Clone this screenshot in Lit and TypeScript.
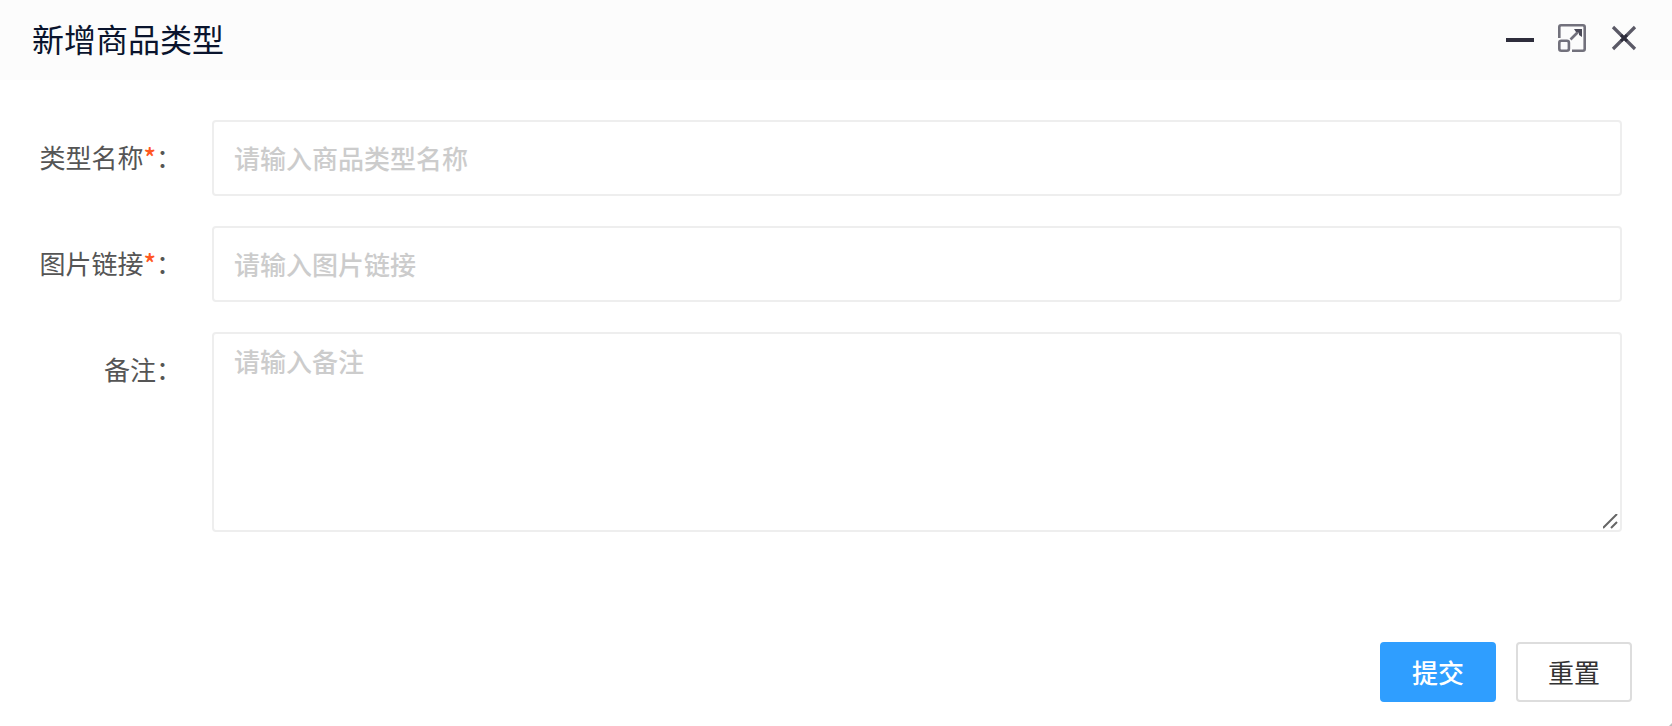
import { LitElement, html, css } from "lit";
import { customElement } from "lit/decorators.js";

@customElement("app-root")
export class AppRoot extends LitElement {
  static styles = css`
    :host {
      display: block;
      font-family: "Noto Sans CJK SC", "Noto Sans", sans-serif;
      font-size: 26px;
      line-height: 38px;
      color: #333;
    }
    * {
      box-sizing: border-box;
    }
    .dialog {
      display: flex;
      flex-direction: column;
      min-height: 100vh;
      background: #fff;
      position: relative;
    }
    .header {
      display: flex;
      align-items: center;
      justify-content: space-between;
      height: 80px;
      padding: 0 32px 4px;
      background: #fcfcfc;
    }
    .title {
      margin: 0;
      font-size: 32px;
      font-weight: 400;
      line-height: 76px;
      color: #0a142d;
    }
    .tools {
      display: flex;
      gap: 12px;
    }
    .tool {
      display: block;
      width: 40px;
      height: 40px;
      padding: 0;
      border: 0;
      background: none;
      cursor: pointer;
    }
    .tool svg {
      display: block;
    }
    .form {
      display: flex;
      flex: 1;
      flex-direction: column;
    }
    .fields {
      display: flex;
      flex-direction: column;
      gap: 30px;
      padding: 40px 50px 40px 32px;
    }
    .row {
      display: flex;
      align-items: flex-start;
      gap: 30px;
    }
    .label {
      flex: none;
      width: 150px;
      padding: 18px 0;
      text-align: right;
      white-space: nowrap;
      color: #555;
    }
    .required {
      font-weight: 500;
      color: #ff5722;
    }
    .control {
      display: block;
      flex: 1;
      min-width: 0;
      margin: 0;
      padding: 0 20px;
      border: 2px solid #eee;
      border-radius: 4px;
      outline: none;
      background: #fff;
      font: inherit;
      color: #333;
    }
    .control::placeholder {
      font-weight: 500;
      color: #ccc;
      opacity: 1;
    }
    .control:focus {
      border-color: #d2d2d2;
    }
    .input {
      height: 76px;
      padding-bottom: 2px;
    }
    .area {
      height: 200px;
      padding-top: 8px;
      padding-bottom: 8px;
      resize: vertical;
    }
    .area::-webkit-resizer {
      background: none;
    }
    .area-wrap {
      display: flex;
      flex: 1;
      position: relative;
    }
    .grip {
      position: absolute;
      right: 3px;
      bottom: 2px;
      pointer-events: none;
    }
    .corner {
      position: absolute;
      right: 0;
      bottom: 0;
      pointer-events: none;
    }
    .footer {
      display: flex;
      justify-content: flex-end;
      gap: 20px;
      margin-top: auto;
      padding: 0 40px 24px;
    }
    .button {
      height: 60px;
      padding: 0 30px;
      border: 2px solid #ddd;
      border-radius: 4px;
      background: #fff;
      font: inherit;
      line-height: 56px;
      color: #333;
      cursor: pointer;
    }
    .primary {
      border-color: #2f9eff;
      background: #2f9eff;
      font-weight: 500;
      color: #fff;
    }
  `;

  render() {
    return html`
      <section class="dialog" role="dialog" aria-labelledby="title">
        <header class="header">
          <h1 class="title" id="title">新增商品类型</h1>
          <div class="tools">
            <button class="tool" type="button" aria-label="最小化">
              <svg width="40" height="40" viewBox="0 0 40 40">
                <path d="M10 22H38" stroke="#2e2d3c" stroke-width="4" />
              </svg>
            </button>
            <button class="tool" type="button" aria-label="最大化">
              <svg width="40" height="40" viewBox="0 0 40 40" fill="none" stroke="#72717c" stroke-width="2.6">
                <path d="M11.3 20V9Q11.3 7.3 13 7.3H35Q36.7 7.3 36.7 9V31Q36.7 32.7 35 32.7H24" />
                <rect x="11.3" y="22.7" width="9.6" height="10" rx="2" />
                <path d="M22.5 21.5L32 12" />
                <path d="M26 11H34V19L31 17V14H28Z" fill="#4b4a58" stroke="none" />
              </svg>
            </button>
            <button class="tool" type="button" aria-label="关闭">
              <svg width="40" height="40" viewBox="0 0 40 40">
                <path d="M13 9L35 31M35 9L13 31" stroke="#5a5966" stroke-width="3.2" />
                <path d="M21 17L27 23M27 17L21 23" stroke="#2e2d3c" stroke-width="3" />
              </svg>
            </button>
          </div>
        </header>
        <form class="form" @submit=${(e: Event) => e.preventDefault()}>
          <div class="fields">
            <div class="row">
              <label class="label" for="name">类型名称<span class="required">*</span>：</label>
              <input class="control input" id="name" type="text" placeholder="请输入商品类型名称" required />
            </div>
            <div class="row">
              <label class="label" for="link">图片链接<span class="required">*</span>：</label>
              <input class="control input" id="link" type="text" placeholder="请输入图片链接" required />
            </div>
            <div class="row">
              <label class="label" for="note">备注：</label>
              <div class="area-wrap">
                <textarea class="control area" id="note" placeholder="请输入备注"></textarea>
                <svg class="grip" width="16" height="16" viewBox="0 0 16 16" stroke="#666" stroke-width="2">
                  <path d="M0 14L14 0M8 14L14 8" />
                </svg>
              </div>
            </div>
          </div>
          <footer class="footer">
            <button class="button primary" type="submit">提交</button>
            <button class="button" type="reset">重置</button>
          </footer>
        </form>
        <svg class="corner" width="3" height="3" viewBox="0 0 3 3" aria-hidden="true">
          <path d="M0 3L3 0V3Z" fill="#bbb" />
        </svg>
      </section>
    `;
  }
}
